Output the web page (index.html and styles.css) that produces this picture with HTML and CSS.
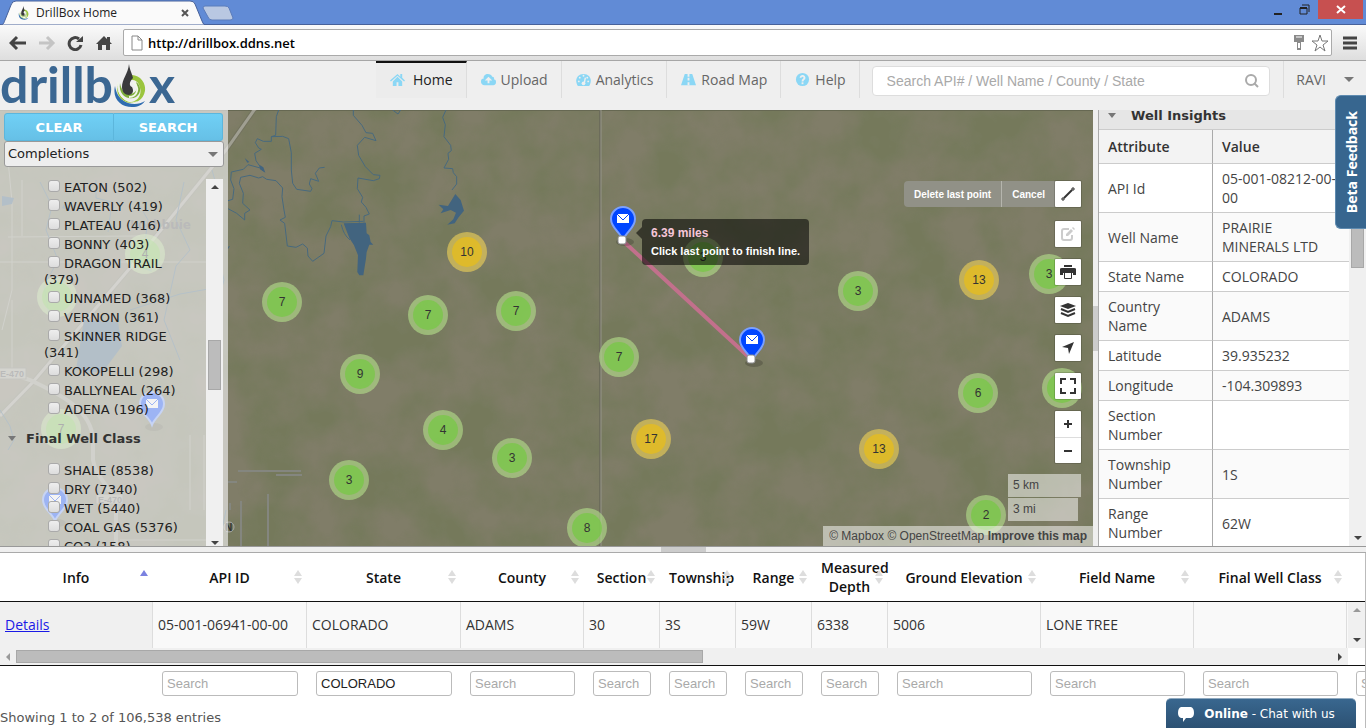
FILE: index.html
```html
<!DOCTYPE html>
<html lang="en">
<head>
    <meta charset="UTF-8">
    <meta name="viewport" content="width=device-width, initial-scale=1.0">
    <title>DrillBox Home</title>
    <link rel="stylesheet" href="styles.css">
</head>
<body>
    <div class="tab-strip">
        <div class="tab">
            <svg class="tab-shape" width="206" height="25" viewBox="0 0 206 25"><path d="M0 25 C4 25 4 22 5 20 L11 5 Q12 1 16 1 H190 Q194 1 195 4 L202 21 Q203 25 206 25 Z" fill="#fafafa" stroke="#47619a"/></svg>
            <svg class="favicon" width="14" height="14" viewBox="0 0 36 44"><use href="#drop"/></svg>
            <span class="tab-title">DrillBox Home</span>
            <button class="tab-close" aria-label="Close tab"><svg width="8" height="8" viewBox="0 0 8 8"><path d="M1 1 L7 7 M7 1 L1 7" stroke="#555" stroke-width="2"/></svg></button>
        </div>
        <button class="new-tab" aria-label="New tab"><svg width="32" height="16" viewBox="0 0 32 16"><path d="M3 1 H23 Q26 1 27 3 L31 13 Q31 15 28 15 H10 Q7 15 6 12 L1 3 Q1 1 3 1 Z" fill="#b9c8e2" stroke="#5b7cbb"/></svg></button>
        <div class="window-buttons">
            <button aria-label="Minimize"><svg width="10" height="12" viewBox="0 0 10 12"><path d="M1 10 H9" stroke="#222" stroke-width="2"/></svg></button>
            <button aria-label="Restore"><svg width="12" height="12" viewBox="0 0 12 12"><path d="M1 4 H8 V10 H1 Z M3 1 H10 V8" fill="none" stroke="#222"/><path d="M1 4 H8" stroke="#222" stroke-width="2"/></svg></button>
            <button class="window-close" aria-label="Close"><svg width="10" height="10" viewBox="0 0 10 10"><path d="M1 1 L9 8 M9 1 L1 8" stroke="#fff" stroke-width="2"/></svg></button>
        </div>
    </div>

    <div class="toolbar">
        <button aria-label="Back"><svg width="18" height="16" viewBox="0 0 18 16"><path d="M2 8 H17 M8 2 L2 8 L8 14" fill="none" stroke="#444" stroke-width="3"/></svg></button>
        <button aria-label="Forward"><svg width="18" height="16" viewBox="0 0 18 16"><path d="M1 8 H15 M9 2 L15 8 L9 14" fill="none" stroke="#c4c4c4" stroke-width="3"/></svg></button>
        <button aria-label="Reload"><svg width="18" height="16" viewBox="0 0 18 16"><path d="M14 10 A6 6 0 1 1 12 4" fill="none" stroke="#444" stroke-width="3"/><path d="M16 1 V7 H9 Z" fill="#444"/></svg></button>
        <button aria-label="Home page"><svg width="16" height="16" viewBox="0 0 16 16"><path d="M8 1 L0 9 H2 V15 H6 V10 H10 V15 H14 V9 H16 L14 7 V2 H11 V4 Z" fill="#444"/></svg></button>
        <div class="address">
            <svg width="12" height="16" viewBox="0 0 12 16"><path d="M1 1 H7 L11 5 V15 H1 Z M7 1 V5 H11" fill="#fff" stroke="#888"/></svg>
            <input type="text" aria-label="Address" value="http://drillbox.ddns.net">
            <svg width="12" height="16" viewBox="0 0 12 16"><path d="M1 0 H11 V7 H8 V15 H4 V7 H1 Z" fill="#8a8a8a"/><path d="M3 2 H9" stroke="#fff"/><path d="M6 8 V13" stroke="#fff" stroke-width="2"/></svg>
            <svg width="20" height="20" viewBox="0 0 20 20"><path d="M10 2 L12 8 H18 L13 12 L15 18 L10 14 L5 18 L7 12 L2 8 H8 Z" fill="#fff" stroke="#777"/></svg>
        </div>
        <button aria-label="Menu"><svg width="14" height="14" viewBox="0 0 14 14"><path d="M0 2 H14 M0 7 H14 M0 12 H14" stroke="#444" stroke-width="3"/></svg></button>
    </div>

    <header class="site-header">
        <a class="logo" href="#" aria-label="drillbox">
            <span>drillb</span>
            <svg width="36" height="44" viewBox="0 0 36 44">
                <g id="drop">
                    <path d="M2 22 C-1 35 8 43 19 43 C25 43 29 41 32 37 C26 41 17 41 11 37 C5 33 3 28 2 22 Z" fill="#2f6cb0"/>
                    <path d="M19 11 A14 14 0 1 1 5 20 C4 29 9 36 17 38 C25 38 29 30 27 24 C26 18 22 15 16 16 Z" fill="#9bc53d"/>
                    <path d="M7 19 C5 31 15 37 23 33 C29 29 28 21 23 18 C26 25 22 30 17 30 C11 30 8 25 7 19 Z" fill="#7fae3d"/>
                    <path d="M5 18 C3 30 12 40 24 38" fill="none" stroke="#f2f7e8" stroke-width="1"/>
                    <path d="M20 19 C27 22 25 33 16 33" fill="none" stroke="#f2f7e8" stroke-width="2"/>
                    <path d="M16 0 C15 10 9 15 9 23 C9 28 12 31 16 31 C20 30 21 27 19 23 C16 22 16 18 20 14 C19 9 17 7 16 0 Z" fill="#3a3a3c"/>
                </g>
            </svg>
            <span>x</span>
        </a>
        <nav>
            <a class="active" href="#"><svg width="15" height="15" viewBox="0 0 16 16"><path d="M8 2 L0 9 L1 10 L8 4 L15 10 L16 9 L13 6 V2 H11 V5 Z M8 5 L3 10 V15 H7 V11 H9 V15 H13 V10 Z"/></svg>Home</a>
            <a href="#"><svg width="15" height="15" viewBox="0 0 16 16"><path fill-rule="evenodd" d="M4 14 C1 14 0 12 0 10 C0 8 1 7 3 7 C2 4 5 2 7 2 C10 2 11 3 12 5 C14 5 14 6 14 8 C16 8 16 10 16 11 C16 13 15 14 13 14 Z M8 5 L4 9 H7 V12 H9 V9 H12 Z"/></svg>Upload</a>
            <a href="#"><svg width="15" height="15" viewBox="0 0 16 16"><path d="M2 15 C-2 9 1 2 8 2 C15 2 18 9 14 15 Z"/><path d="M9 11 L10 6" stroke="#efefef" stroke-width="1.5"/><g fill="#efefef"><circle cx="8" cy="12" r="2"/><circle cx="3" cy="10" r="1"/><circle cx="4" cy="6" r="1"/><circle cx="8" cy="4" r="1"/><circle cx="12" cy="6" r="1"/><circle cx="13" cy="10" r="1"/></g></svg>Analytics</a>
            <a href="#"><svg width="15" height="15" viewBox="0 0 16 16"><path d="M4 2 H12 L16 14 H0 Z"/><path d="M8 2 V5 M8 6 V9 M8 11 V14" stroke="#efefef" stroke-width="2"/></svg>Road Map</a>
            <a href="#"><svg width="15" height="15" viewBox="0 0 16 16"><circle cx="8" cy="8" r="7"/><path d="M6 6 C6 3 11 4 10 7 C9 8 8 8 8 10" fill="none" stroke="#efefef" stroke-width="2"/><path d="M7 11 H9 V13 H7 Z" fill="#efefef"/></svg>Help</a>
        </nav>
        <div class="search">
            <input type="text" aria-label="Search wells" placeholder="Search API# / Well Name / County / State">
            <button aria-label="Search"><svg width="14" height="14" viewBox="0 0 14 14"><circle cx="6" cy="6" r="5" fill="none" stroke="#aaa" stroke-width="2"/><path d="M9 9 L13 13" stroke="#aaa" stroke-width="2"/></svg></button>
        </div>
        <button class="user">RAVI<span class="caret"></span></button>
    </header>

    <main>
        <section class="map-area">
            <svg class="map" width="100%" height="100%">
                <defs>
                    <filter id="terrain" x="0" y="0" width="100%" height="100%" color-interpolation-filters="sRGB">
                        <feTurbulence type="fractalNoise" baseFrequency="0.02" numOctaves="4" seed="8"/>
                        <feColorMatrix values="0 0 0 0 .45  0 0 0 0 .475  0 0 0 0 .35  2.4 0 0 0 -0.7"/>
                    </filter>
                    <g id="pin">
                        <ellipse cx="2" cy="2" rx="9" ry="4" fill="#000" opacity=".18"/>
                        <path d="M0 0 C-3 -8 -12 -12 -12 -21 A12 12 0 0 1 12 -21 C12 -12 3 -8 0 0 Z" fill="#0045ff" stroke="#7ba0ff" stroke-width="2"/>
                        <path d="M-6 -26 H6 V-17 H-6 Z" fill="#fff"/>
                        <path d="M-6 -26 L0 -20 L6 -26" fill="none" stroke="#0045ff"/>
                    </g>
                </defs>
                <rect width="100%" height="100%" fill="#807d68"/>
                <rect width="100%" height="100%" filter="url(#terrain)" opacity=".8"/>
                <rect width="100%" height="1" fill="#666852"/>

                <!-- roads -->
                <g fill="none" stroke="#999a8a">
                    <path d="M373 0 V436" transform="translate(227 0)" stroke="#6c6c5b" stroke-width="2"/>
                    <path d="M601 0 V436" stroke="#96958a"/>
                    <path d="M257 -4 L226 40 L130 158 L33 272 L0 306" stroke="#73735f" stroke-width="5"/>
                    <path d="M257 -4 L226 40 L130 158 L33 272 L0 306" stroke="#a09f92" stroke-width="3"/>
                    <path d="M0 260 L30 270 C60 284 92 300 93 330 V350 C96 370 116 380 116 400 V436" stroke-width="4"/>
                    <path d="M8 50 L12 92 V180 L2 220 M22 70 V126 M8 127 L140 126 M0 152 H206 M12 190 V260 M190 325 V400 M204 325 V400 M120 430 H206"/>
                    <path d="M238 361 H301 M276 365 H302 M241 391 V436 M268 384 V436 M228 372 H237 M230 393 V400" stroke="#84867f" stroke-width="2"/>
                </g>

                <!-- rivers -->
                <g transform="translate(228 0) scale(.3333)" fill="none" stroke="#47697e" stroke-width="3">
                    <path d="M152 0 L145 20 L143 76 L130 80 V94 H106 L88 86 L82 98 L92 114 L100 118 L80 130 L84 152 L106 184"/>
                    <path d="M130 80 L164 79 L182 86 L190 128 V180 L194 220 L206 238 L248 244 L252 236 L244 222 L248 206 L272 214 L262 190 L274 174 L290 172"/>
                    <path d="M104 176 L60 164 L46 178 L10 186 L8 210 L18 236 L14 268 L0 272"/>
                    <path d="M0 296 L26 310 L50 330 V310 L66 300 L44 280 L46 250 L34 220 L38 202 L66 196 L92 204 L104 200 L116 208 L144 212 L164 234 L162 260 L168 300 L172 322 L156 330 L170 340 L178 408 L204 412 L224 402 L238 414 L240 438 L254 454 L288 430 L294 378 L308 350 L312 332 L346 336 L406 334"/>
                    <path d="M376 0 V16 L402 46 L414 68 L434 70 L444 92 L410 82 L388 106 L392 136 L412 170 L436 194 L456 196 L454 206 L436 212 L390 204 L388 236 L404 262 L400 276 L414 292 L424 312 L408 318 V338 M394 314 V338"/>
                    <path d="M654 0 L644 22 L652 44 L648 80 L668 106 L670 122 L660 130 L662 148 L648 174 L674 176 L676 188 L686 200 V222 L672 240"/>
                    <path d="M494 0 L510 12 L518 0 M0 416 L4 408"/>
                    <path d="M340 344 Q346 374 366 390"/>
                </g>
                <g transform="translate(228 0) scale(.3333)" fill="#42647f">
                    <path d="M347 340 L414 338 L416 370 L424 376 L428 396 L436 404 L424 404 L416 426 L414 446 L406 496 L394 496 L388 486 L390 436 L378 406 L364 384 Z"/>
                    <path d="M682 252 L698 270 L708 302 L692 322 L680 340 L658 344 L676 328 L684 308 L668 300 L638 310 L646 298 L632 284 L660 288 Z"/>
                    <path d="M94 164 L106 172 L112 188 L96 178 Z M50 144 L64 156 L58 158 Z"/>
                </g>
                <g fill="none" stroke="#47697e">
                    <path d="M40 72 L52 96 L46 120 L58 150 L44 176 L50 210 M184 72 L176 110 L190 140 L176 156 L164 210 L180 250 M140 96 L148 110 L144 138 M96 70 V88 L112 92 L108 122 M0 300 L10 316 L14 330 L8 340 M212 60 L220 88 L214 130 L224 170 L210 220 M130 200 L180 184 L214 178 M218 440 L226 400"/>
                </g>
                <path d="M84 210 L76 260 L102 263 L122 236 L118 212 Z M144 136 L152 162 L142 158 Z M2 86 L14 88 L12 94 L2 96 Z M64 94 L72 102 L62 98 Z" fill="#42647f"/>

                <g class="place">
                    <text x="130" y="119" class="town">Lochbuie</text>
                    <rect x="-8" y="258" width="34" height="11"/><text x="0" y="267">E-470</text>
                    <rect x="96" y="384" width="27" height="10"/><text x="98" y="393">E-470</text>
                    <circle cx="229" cy="417" r="5" fill="none" stroke="#aaa"/><text x="225" y="421" class="edge">N</text>
                </g>

                <use href="#pin" x="152" y="315"/>
                <use href="#pin" x="55" y="411"/>

                <g class="cluster">
                    <g transform="translate(145 144)"><circle r="20"/><circle r="15"/><text y="4">4</text></g>
                    <g transform="translate(57 187)"><circle r="20"/><circle r="15"/></g>
                    <g transform="translate(61 319)"><circle r="20"/><circle r="15"/><text y="4">7</text></g>
                    <g transform="translate(282 192)"><circle r="20"/><circle r="15"/><text y="4">7</text></g>
                    <g transform="translate(428 205)"><circle r="20"/><circle r="15"/><text y="4">7</text></g>
                    <g transform="translate(516 201)"><circle r="20"/><circle r="15"/><text y="4">7</text></g>
                    <g transform="translate(360 264)"><circle r="20"/><circle r="15"/><text y="4">9</text></g>
                    <g transform="translate(443 320)"><circle r="20"/><circle r="15"/><text y="4">4</text></g>
                    <g transform="translate(349 370)"><circle r="20"/><circle r="15"/><text y="4">3</text></g>
                    <g transform="translate(512 348)"><circle r="20"/><circle r="15"/><text y="4">3</text></g>
                    <g transform="translate(587 418)"><circle r="20"/><circle r="15"/><text y="4">8</text></g>
                    <g transform="translate(619 247)"><circle r="20"/><circle r="15"/><text y="4">7</text></g>
                    <g transform="translate(703 147)"><circle r="20"/><circle r="15"/><text y="4">3</text></g>
                    <g transform="translate(858 181)"><circle r="20"/><circle r="15"/><text y="4">3</text></g>
                    <g transform="translate(1049 164)"><circle r="20"/><circle r="15"/><text y="4">3</text></g>
                    <g transform="translate(978 283)"><circle r="20"/><circle r="15"/><text y="4">6</text></g>
                    <g transform="translate(1062 278)"><circle r="20"/><circle r="15"/></g>
                    <g transform="translate(986 405)"><circle r="20"/><circle r="15"/><text y="4">2</text></g>
                </g>
                <g class="cluster medium">
                    <g transform="translate(467 142)"><circle r="20"/><circle r="15"/><text y="4">10</text></g>
                    <g transform="translate(651 329)"><circle r="20"/><circle r="15"/><text y="4">17</text></g>
                    <g transform="translate(979 170)"><circle r="20"/><circle r="15"/><text y="4">13</text></g>
                    <g transform="translate(879 339)"><circle r="20"/><circle r="15"/><text y="4">13</text></g>
                </g>

                <!-- measured line -->
                <path d="M622 130 L751 249" stroke="#c2708c" stroke-width="4"/>
                <use href="#pin" x="623" y="130"/>
                <use href="#pin" x="752" y="251"/>
                <rect x="618" y="126" width="8" height="8" rx="2" fill="#fff" stroke="#888"/>
                <rect x="747" y="245" width="8" height="8" rx="2" fill="#fff" stroke="#888"/>
            </svg>

            <aside class="filters">
                <div class="filter-buttons">
                    <button>CLEAR</button>
                    <button>SEARCH</button>
                </div>
                <div class="filter-select">
                    <select aria-label="Filter group"><option>Completions</option></select>
                    <span class="caret"></span>
                </div>
                <div class="filter-scroll">
                    <div class="filter-list">
                        <ul>
                            <li><label><input type="checkbox">EATON (502)</label></li>
                            <li><label><input type="checkbox">WAVERLY (419)</label></li>
                            <li><label><input type="checkbox">PLATEAU (416)</label></li>
                            <li><label><input type="checkbox">BONNY (403)</label></li>
                            <li><label><input type="checkbox">DRAGON TRAIL (379)</label></li>
                            <li><label><input type="checkbox">UNNAMED (368)</label></li>
                            <li><label><input type="checkbox">VERNON (361)</label></li>
                            <li><label><input type="checkbox">SKINNER RIDGE (341)</label></li>
                            <li><label><input type="checkbox">KOKOPELLI (298)</label></li>
                            <li><label><input type="checkbox">BALLYNEAL (264)</label></li>
                            <li><label><input type="checkbox">ADENA (196)</label></li>
                        </ul>
                        <h3><span class="caret"></span>Final Well Class</h3>
                        <ul>
                            <li><label><input type="checkbox">SHALE (8538)</label></li>
                            <li><label><input type="checkbox">DRY (7340)</label></li>
                            <li><label><input type="checkbox">WET (5440)</label></li>
                            <li><label><input type="checkbox">COAL GAS (5376)</label></li>
                            <li><label><input type="checkbox">CO2 (158)</label></li>
                        </ul>
                    </div>
                    <div class="scrollbar">
                        <span class="arrow up"></span>
                        <span class="track"></span>
                        <span class="thumb"></span>
                        <span class="track"></span>
                        <span class="arrow down"></span>
                    </div>
                </div>
            </aside>

            <div class="measure-tip">
                <span>6.39 miles</span>
                Click last point to finish line.
            </div>

            <div class="map-controls">
                <div class="draw">
                    <button class="draw-action">Delete last point</button>
                    <button class="draw-action">Cancel</button>
                    <button class="control" aria-label="Draw line"><svg width="16" height="16" viewBox="0 0 16 16"><path d="M4 12 L12 4" stroke="#333" stroke-width="2"/><path d="M2 12 H4 V14 H2 Z M12 2 H14 V4 H12 Z" fill="#fff" stroke="#333"/></svg></button>
                </div>
                <button class="control" aria-label="Edit"><svg width="16" height="16" viewBox="0 0 16 16"><path d="M9 3 H4 Q2 3 2 5 V12 Q2 14 4 14 H10 Q12 14 12 12 V9" fill="none" stroke="#ccc" stroke-width="2"/><path d="M6 8 L11 3 L13 5 L8 10 H6 Z M12 2 L13 1 L15 3 L14 4 Z" fill="#ccc"/></svg></button>
                <button class="control" aria-label="Print"><svg width="16" height="16" viewBox="0 0 16 16"><path d="M4 1 H12 V3 H4 Z M0 5 Q0 4 2 4 H14 Q16 4 16 5 V11 H13 V9 H3 V11 H0 Z" fill="#333"/><path d="M4.500 9 V14.500 H11.500 V9" fill="#fff" stroke="#333"/></svg></button>
                <button class="control" aria-label="Layers"><svg width="16" height="16" viewBox="0 0 16 16"><path d="M8 1 L16 4 L8 7 L0 4 Z" fill="#333"/><path d="M1 7 L8 10 L15 7 M1 11 L8 14 L15 11" fill="none" stroke="#333" stroke-width="2"/></svg></button>
                <button class="control" aria-label="Locate"><svg width="16" height="16" viewBox="0 0 16 16"><path d="M14 2 L9 14 L8 8 L2 7 Z" fill="#333"/></svg></button>
                <button class="control" aria-label="Fullscreen"><svg width="16" height="16" viewBox="0 0 16 16"><path d="M1 6 V1 H6 M10 1 H15 V6 M15 10 V15 H10 M6 15 H1 V10" fill="none" stroke="#333" stroke-width="2"/></svg></button>
                <div class="zoom">
                    <button aria-label="Zoom in"><svg width="8" height="8" viewBox="0 0 8 8"><path d="M0 4 H8 M4 0 V8" stroke="#333" stroke-width="2"/></svg></button>
                    <button aria-label="Zoom out"><svg width="8" height="8" viewBox="0 0 8 8"><path d="M0 4 H8" stroke="#333" stroke-width="2"/></svg></button>
                </div>
            </div>

            <div class="map-footer">
                <div class="scale">
                    <span class="km">5 km</span>
                    <span class="mi">3 mi</span>
                </div>
                <div class="attribution"><a href="#">© Mapbox</a> <a href="#">© OpenStreetMap</a> <a href="#"><b>Improve this map</b></a></div>
            </div>
        </section>

        <div class="splitter vertical"><span></span></div>

        <aside class="insights">
            <div class="insights-body">
                <h3><span class="caret"></span>Well Insights</h3>
                <table>
                    <tr><th>Attribute</th><th>Value</th></tr>
                    <tr><td>API Id</td><td>05-001-08212-00-<wbr>00</td></tr>
                    <tr><td>Well Name</td><td>PRAIRIE MINERALS LTD</td></tr>
                    <tr><td>State Name</td><td>COLORADO</td></tr>
                    <tr><td>Country Name</td><td>ADAMS</td></tr>
                    <tr><td>Latitude</td><td>39.935232</td></tr>
                    <tr><td>Longitude</td><td>-104.309893</td></tr>
                    <tr><td>Section Number</td><td></td></tr>
                    <tr><td>Township Number</td><td>1S</td></tr>
                    <tr><td>Range Number</td><td>62W</td></tr>
                </table>
            </div>
            <div class="scrollbar">
                <span class="arrow up"></span>
                <span class="thumb tall"></span>
                <span class="track"></span>
                <span class="arrow down"></span>
            </div>
        </aside>
    </main>

    <div class="splitter horizontal"><span></span></div>

    <section class="results">
        <table class="head">
            <colgroup><col class="first"><col class="wide"><col class="wide"><col class="mid"><col class="slim" span="4"><col class="first" span="4"></colgroup>
            <tr>
                <th class="sorted">Info</th>
                <th>API ID</th>
                <th>State</th>
                <th>County</th>
                <th>Section</th>
                <th>Township</th>
                <th>Range</th>
                <th>Measured Depth</th>
                <th>Ground Elevation</th>
                <th>Field Name</th>
                <th>Final Well Class</th>
                <td></td>
            </tr>
        </table>
        <div class="rows">
            <div class="rows-clip">
                <table class="data">
                    <colgroup><col class="first"><col class="wide"><col class="wide"><col class="mid"><col class="slim" span="4"><col class="first" span="4"></colgroup>
                    <tr>
                        <td><a href="#">Details</a></td>
                        <td>05-001-06941-00-00</td>
                        <td>COLORADO</td>
                        <td>ADAMS</td>
                        <td>30</td>
                        <td>3S</td>
                        <td>59W</td>
                        <td>6338</td>
                        <td>5006</td>
                        <td>LONE TREE</td>
                        <td></td>
                        <td></td>
                    </tr>
                </table>
            </div>
            <div class="scrollbar">
                <span class="arrow up off"></span>
                <span class="track"></span>
                <span class="arrow down"></span>
            </div>
        </div>
        <div class="h-scrollbar">
            <span class="arrow left off"></span>
            <span class="thumb"></span>
            <span class="track"></span>
            <span class="arrow right"></span>
        </div>
        <div class="foot">
            <table>
                <colgroup><col class="first"><col class="wide"><col class="wide"><col class="mid"><col class="slim" span="4"><col class="first" span="4"></colgroup>
                <tr>
                    <td></td>
                    <td><input type="text" aria-label="Search API ID" placeholder="Search"></td>
                    <td><input type="text" aria-label="Search State" placeholder="Search" value="COLORADO"></td>
                    <td><input type="text" aria-label="Search County" placeholder="Search"></td>
                    <td><input type="text" aria-label="Search Section" placeholder="Search"></td>
                    <td><input type="text" aria-label="Search Township" placeholder="Search"></td>
                    <td><input type="text" aria-label="Search Range" placeholder="Search"></td>
                    <td><input type="text" aria-label="Search Measured Depth" placeholder="Search"></td>
                    <td><input type="text" aria-label="Search Ground Elevation" placeholder="Search"></td>
                    <td><input type="text" aria-label="Search Field Name" placeholder="Search"></td>
                    <td><input type="text" aria-label="Search Final Well Class" placeholder="Search"></td>
                    <td><input type="text" aria-label="Search" placeholder="Search"></td>
                </tr>
            </table>
        </div>
        <p class="entries">Showing 1 to 2 of 106,538 entries</p>
    </section>

    <button class="feedback">Beta Feedback</button>
    <button class="chat">
        <svg width="18" height="18" viewBox="0 0 18 18"><path d="M4 2 H14 Q17 3 17 8 Q17 12 14 13 H9 L6 17 V13 H4 Q1 12 1 8 Q1 3 4 2 Z" fill="#fff"/></svg>
        <span><b>Online</b> - Chat with us</span>
    </button>
</body>
</html>
```
FILE: styles.css
```css
* {
    box-sizing: border-box;
}
body {
    margin: 0;
    height: 100vh;
    display: flex;
    flex-direction: column;
    overflow: hidden;
    position: relative;
    font-family: "Open Sans", sans-serif;
    font-size: 14px;
    color: #444;
    background-color: #fff;
}
button {
    font: inherit;
    color: inherit;
    border: 0;
    padding: 0;
    background: none;
    display: flex;
    align-items: center;
    justify-content: center;
}
svg {
    display: block;
    flex: none;
}
a {
    color: inherit;
    text-decoration: none;
}
h3 {
    margin: 0;
    font-family: "DejaVu Sans", sans-serif;
    font-size: 13px;
    color: #333;
}
.caret {
    display: inline-block;
    border: 5px solid transparent;
    border-top-color: #777;
    border-bottom-width: 0;
}

/* browser window */
.tab-strip {
    display: flex;
    height: 25px;
    background-color: #618bd6;
    border-bottom: 1px solid #47619a;
}
.tab {
    position: relative;
    display: flex;
    align-items: center;
    width: 202px;
    height: 25px;
    padding: 0 13px 0 17px;
    gap: 5px;
    font-size: 12px;
    color: #222;
}
.tab-shape {
    position: absolute;
    left: 0;
    top: 0;
}
.favicon, .tab-title, .tab-close {
    position: relative;
}
.tab-close {
    margin-left: auto;
}
.new-tab {
    height: 25px;
}
.window-buttons {
    display: flex;
    margin-left: auto;
    margin-right: 3px;
}
.window-buttons button {
    width: 27px;
    height: 19px;
}
.window-buttons .window-close {
    width: 45px;
    background-color: #c75050;
}
.toolbar {
    display: flex;
    align-items: center;
    height: 36px;
    padding: 0 9px;
    gap: 11px;
    background: linear-gradient(#fafafa, #dedede);
    border-bottom: 1px solid #a6a6a6;
}
.address {
    flex: 1;
    display: flex;
    align-items: center;
    height: 27px;
    padding: 0 1px 0 7px;
    gap: 5px;
    background-color: #fff;
    border: 1px solid #aaa;
    border-radius: 2px;
}
.address input {
    flex: 1;
    border: 0;
    padding: 0;
    font: 600 13px "Open Sans", sans-serif;
    color: #000;
}

/* site header */
.site-header {
    display: flex;
    height: 49px;
    background-color: #efefef;
}
.logo {
    display: flex;
    align-items: flex-start;
    width: 376px;
    font: 700 50px/46px Lato, sans-serif;
    color: #3b6792;
}
.logo svg {
    margin-top: 3px;
}
nav {
    display: flex;
    height: 37px;
}
nav a {
    display: flex;
    align-items: center;
    gap: 5px;
    padding: 0 13px 0 14px;
    border-right: 1px solid #ddd;
    color: #666;
}
nav a.active {
    gap: 8px;
    padding-bottom: 2px;
    border-top: 2px solid #111;
    background-color: #ececec;
    color: #222;
}
nav svg {
    fill: #8bd7f5;
}
.search {
    display: flex;
    align-items: center;
    flex: 1;
    height: 30px;
    margin: 5px 13px 0 12px;
    padding: 0 10px 0 14px;
    background-color: #fff;
    border: 1px solid #ddd;
    border-radius: 4px;
}
.search input {
    flex: 1;
    border: 0;
    padding: 0;
    font: 14px "Liberation Sans", sans-serif;
}
.search input::placeholder, .foot input::placeholder {
    color: #a9a9a9;
    opacity: 1;
}
.user {
    height: 37px;
    padding: 0 12px;
    gap: 18px;
    border-left: 1px solid #ddd;
    color: #666;
}

/* map */
main {
    flex: 1;
    display: flex;
    min-height: 0;
}
.map-area {
    position: relative;
    flex: 1;
    display: flex;
    overflow: hidden;
    font-family: "Liberation Sans", sans-serif;
    font-size: 12px;
}
.map {
    position: absolute;
    left: 0;
    top: 0;
}
.cluster {
    fill: #b5e28c;
    fill-opacity: .6;
}
.cluster circle + circle {
    fill: #6ecc39;
}
.cluster.medium {
    fill: #f1d357;
}
.cluster.medium circle + circle {
    fill: #f0c20c;
}
.cluster text {
    fill: #333;
    fill-opacity: 1;
    text-anchor: middle;
}
.place {
    font: bold 9px "Liberation Sans", sans-serif;
    fill: #555;
}
.place rect {
    fill: #a2a294;
    stroke: #77776a;
}
.place .town {
    font: bold 12px "DejaVu Sans", sans-serif;
}
.place .edge {
    font-size: 10px;
    fill: #333;
}

.filters {
    position: relative;
    display: flex;
    flex-direction: column;
    width: 228px;
    padding: 3px 4px 0 4px;
    background-color: rgba(238, 238, 238, .66);
    font-family: "DejaVu Sans", sans-serif;
    font-size: 13px;
    color: #222;
}
.filter-buttons {
    display: flex;
    width: 219px;
}
.filter-buttons button {
    flex: 1;
    height: 28px;
    border: 1px solid #5cb6dc;
    border-radius: 3px 0 0 3px;
    background: linear-gradient(#70d0f6, #66c0e6);
    color: #fff;
    font-weight: bold;
}
.filter-buttons button + button {
    border-left: 0;
    border-radius: 0 3px 3px 0;
}
.filter-select {
    position: relative;
    display: flex;
}
.filter-select select {
    flex: 1;
    height: 26px;
    padding: 0 3px 2px 3px;
    appearance: none;
    border: 1px solid #999;
    border-radius: 3px;
    background-color: #eee;
    font: inherit;
    color: #222;
}
.filter-select .caret {
    position: absolute;
    right: 6px;
    top: 11px;
}
.filter-scroll {
    display: flex;
    flex: 1;
    min-height: 0;
    margin-top: 12px;
    overflow: hidden;
}
.filter-list {
    width: 202px;
    padding-top: 1px;
    line-height: 16px;
}
.filter-list ul {
    list-style: none;
    margin: 0;
    padding: 0 16px 0 40px;
}
.filter-list li {
    margin-bottom: 3px;
}
.filter-list input {
    appearance: none;
    width: 12px;
    height: 12px;
    margin: 0 4px 0 4px;
    border: 1px solid #aaa;
    border-radius: 3px;
    background: linear-gradient(#eee, #ddd);
}
.filter-list h3 {
    padding: 10px 0 16px 4px;
}
h3 .caret {
    border-width: 4px;
    border-bottom-width: 0;
    border-top-width: 5px;
    margin-right: 10px;
    vertical-align: 2px;
}

.scrollbar {
    display: flex;
    flex-direction: column;
    align-items: center;
    width: 17px;
    background-color: #f0f0f0;
}
.scrollbar .thumb {
    width: 13px;
    height: 50px;
    border: 1px solid #a8a8a8;
    background-color: #bcbcbc;
}
.scrollbar .thumb.tall {
    height: 142px;
}
.track {
    flex: 1;
}
.arrow {
    border: 4px solid transparent;
    margin: 6px;
}
.arrow.up {
    border-bottom-color: #444;
    border-top-width: 0;
}
.arrow.down {
    border-top-color: #444;
    border-bottom-width: 0;
}
.scrollbar .arrow.down {
    margin-bottom: 1px;
}
.rows .arrow.down, .insights .arrow.down {
    margin-bottom: 6px;
}
.arrow.left {
    border-right-color: #444;
    border-left-width: 0;
}
.arrow.right {
    border-left-color: #444;
    border-right-width: 0;
}
.arrow.up.off {
    border-bottom-color: #999;
}
.arrow.left.off {
    border-right-color: #999;
}

.measure-tip {
    position: absolute;
    left: 642px;
    top: 109px;
    padding: 5px 9px;
    border-radius: 4px;
    background-color: rgba(0, 0, 0, .55);
    color: #fff;
    font-size: 11px;
    font-weight: bold;
    line-height: 18px;
}
.measure-tip::before {
    content: "";
    position: absolute;
    left: -6px;
    top: 8px;
    border: 6px solid transparent;
    border-right-color: rgba(0, 0, 0, .55);
    border-left-width: 0;
}
.measure-tip span {
    display: block;
    font-size: 12px;
    color: #f5c6d8;
}

.map-controls {
    position: absolute;
    right: 12px;
    top: 71px;
    display: flex;
    flex-direction: column;
    align-items: flex-end;
    gap: 12px;
}
.draw {
    display: flex;
    margin-bottom: 2px;
}
.draw-action {
    height: 26px;
    padding: 0 10px;
    background-color: #919187;
    color: #fff;
    font-size: 10px;
    font-weight: bold;
}
.draw-action:first-child {
    border-radius: 4px 0 0 4px;
    border-right: 1px solid #b5b5ad;
}
.control, .zoom {
    width: 26px;
    background-color: #fff;
    border-radius: 1px;
    box-shadow: 0 0 0 1px rgba(0, 0, 0, .15);
}
.control {
    height: 26px;
}
.zoom button {
    width: 26px;
    height: 26px;
}
.zoom button + button {
    border-top: 1px solid #ddd;
}
.map-footer {
    position: absolute;
    right: 0;
    bottom: 0;
    display: flex;
    flex-direction: column;
    align-items: flex-end;
    gap: 5px;
}
.scale {
    display: flex;
    flex-direction: column;
    width: 73px;
    margin-right: 12px;
    gap: 1px;
    line-height: 23px;
}
.scale span {
    padding-left: 5px;
    background-color: rgba(255, 255, 255, .5);
}
.scale .mi {
    width: 70px;
}
.attribution {
    padding: 0 6px;
    line-height: 20px;
    background-color: rgba(255, 255, 255, .5);
}

/* pane splitters */
.splitter {
    display: flex;
    align-items: center;
    justify-content: center;
    background-color: #efefef;
}
.splitter span {
    background-color: #ccc;
}
.splitter.vertical {
    width: 6px;
    border-right: 1px solid #aaa;
}
.splitter.vertical span {
    width: 5px;
    height: 45px;
}
.splitter.horizontal {
    height: 7px;
    border-top: 1px solid #999;
    border-bottom: 1px solid #aaa;
}
.splitter.horizontal span {
    width: 45px;
    height: 5px;
}

/* well insights */
.insights {
    display: flex;
    width: 267px;
    overflow: hidden;
}
.insights-body {
    flex: 1;
    min-height: 0;
    margin-top: -7px;
}
.insights h3 {
    padding: 0 9px;
    line-height: 26px;
    background-color: #e6e6e6;
    border-bottom: 1px solid #ccc;
}
.insights h3 .caret {
    margin-right: 15px;
}
.insights table {
    width: 100%;
    table-layout: fixed;
    border-collapse: separate;
    border-spacing: 0;
    line-height: 19px;
}
.insights th, .insights td {
    height: 30px;
    padding: 5px 9px;
    border-bottom: 1px solid #ccc;
    text-align: left;
}
.insights th {
    height: 34px;
    background-color: #f3f3f3;
    color: #333;
    font-weight: 600;
}
.insights th:first-child {
    width: 114px;
}
.insights th:first-child, .insights td:first-child {
    padding-right: 20px;
    border-right: 1px solid #aaa;
}
.insights tr:nth-child(odd) td {
    background-color: #fafafa;
}

/* results */
.results {
    overflow: hidden;
    border-right: 1px solid #bbb;
}
.results table {
    table-layout: fixed;
    width: 100px;
    border-collapse: separate;
    border-spacing: 0;
}
.first {
    width: 153px;
}
.wide {
    width: 154px;
}
.mid {
    width: 123px;
}
.slim {
    width: 76px;
}
.head th {
    position: relative;
    height: 48px;
    padding: 0 10px 0 9px;
    line-height: 19px;
    font-weight: 600;
    color: #111;
}
.head th::before, .head th::after {
    content: "";
    position: absolute;
    right: 5px;
    top: 17px;
    border: 4px solid transparent;
    border-top-width: 0;
    border-bottom: 6px solid #ddd;
}
.head th::after {
    top: 25px;
    border-top: 6px solid #ddd;
    border-bottom-width: 0;
}
.head th.sorted::before {
    border-bottom-color: #7b82e0;
}
.head th.sorted::after {
    display: none;
}
.rows {
    display: flex;
    border-top: 1px solid #111;
}
.rows-clip {
    flex: 1;
    overflow: hidden;
}
.data td {
    height: 46px;
    padding: 0 5px 2px 5px;
    border-right: 1px solid #ddd;
    background-color: #f9f9f9;
    color: #333;
}
.data td:first-child {
    background-color: #f0f0f0;
}
.data a {
    color: #1a1ae6;
    text-decoration: underline;
}
.h-scrollbar {
    display: flex;
    align-items: center;
    height: 17px;
    margin-right: 17px;
    background-color: #f0f0f0;
}
.h-scrollbar .thumb {
    width: 51%;
    height: 13px;
    border: 1px solid #a8a8a8;
    background-color: #bcbcbc;
}
.foot {
    border-top: 1px solid #111;
}
.foot td {
    height: 35px;
    padding: 0 9px;
}
.foot input {
    display: block;
    width: 100%;
    height: 25px;
    padding: 0 4px;
    border: 1px solid #bbb;
    border-radius: 3px;
    font: 13px "Liberation Sans", sans-serif;
    color: #222;
}
.entries {
    margin: 7px 0 0;
    font: 13px/20px "DejaVu Sans", sans-serif;
    color: #555;
}

.feedback {
    position: absolute;
    right: 0;
    top: 95px;
    width: 31px;
    height: 134px;
    background-color: #37668f;
    border: 1px solid #5f8bb0;
    border-right: 0;
    border-radius: 6px 0 0 6px;
    color: #fff;
    font-weight: bold;
    writing-mode: sideways-lr;
}
.chat {
    position: absolute;
    right: 10px;
    bottom: 0;
    width: 190px;
    height: 30px;
    padding-right: 10px;
    gap: 9px;
    background: linear-gradient(#39678f, #2c5173);
    border-top: 1px solid #8fa9bf;
    border-radius: 5px 5px 0 0;
    color: #fff;
    font: 12px "DejaVu Sans", sans-serif;
}
```
